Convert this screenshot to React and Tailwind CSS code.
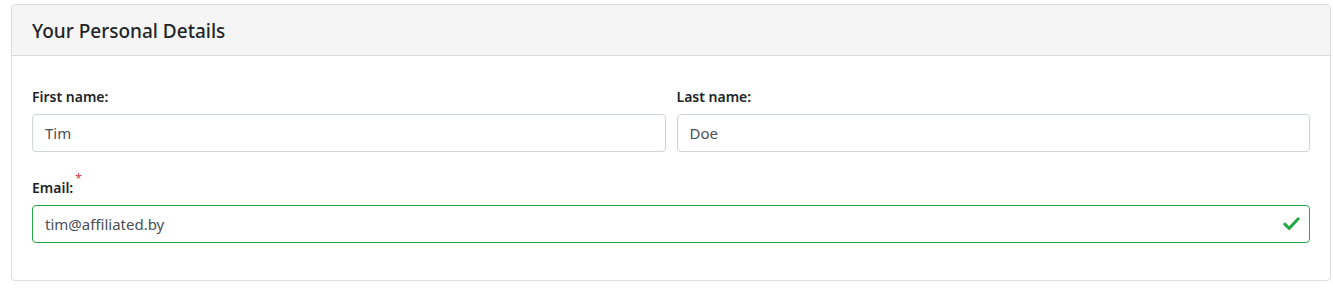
import React from 'react'

const fieldCls = "w-full h-[38px] px-3 border rounded-[4px] text-[15px] text-[#495057] bg-white outline-none"

export default function App() {
  return (
    <div className="w-[1333px] h-[289px] bg-white pt-[4px] pl-[11px]" style={{ fontFamily: '"Noto Sans", "Open Sans", sans-serif' }}>
      <div className="w-[1320px] h-[277px] border border-[#dddddd] rounded-[4px] flex flex-col">
        <div className="h-[51px] bg-[#f5f5f5] border-b border-[#dddddd] rounded-t-[4px] flex items-center px-5 pt-[2px]">
          <h2 className="text-[19px] font-medium text-[#212529]">Your Personal Details</h2>
        </div>
        <div className="px-5 pt-[30px]">
          <div className="flex gap-[11px]">
            <div className="flex-1">
              <label className="block text-[14px] font-semibold text-[#212529] leading-[21px] mb-[7px]">First name:</label>
              <input className={`${fieldCls} border-[#ced4da]`} defaultValue="Tim" />
            </div>
            <div className="flex-1">
              <label className="block text-[14px] font-semibold text-[#212529] leading-[21px] mb-[7px]">Last name:</label>
              <input className={`${fieldCls} border-[#ced4da]`} defaultValue="Doe" />
            </div>
          </div>
          <div className="mt-[25px]">
            <label className="block text-[14px] font-semibold text-[#212529] leading-[21px] mb-[7px]">
              Email:<span className="inline-block align-top text-[#dc3545] font-normal text-[12px] leading-none ml-[2px] -mt-[4px]">*</span>
            </label>
            <div className="relative">
              <input className={`${fieldCls} border-[#28a745] pr-10`} defaultValue="tim@affiliated.by" />
              <svg className="absolute right-[10px] top-1/2 -translate-y-1/2 w-[17px] h-[14px]" viewBox="0 0 17 14" fill="none">
                <path d="M1.8 7.2 L6.2 11.4 L15.2 1.8" stroke="#28a745" strokeWidth="3" strokeLinecap="round" strokeLinejoin="round" />
              </svg>
            </div>
          </div>
        </div>
      </div>
    </div>
  )
}
